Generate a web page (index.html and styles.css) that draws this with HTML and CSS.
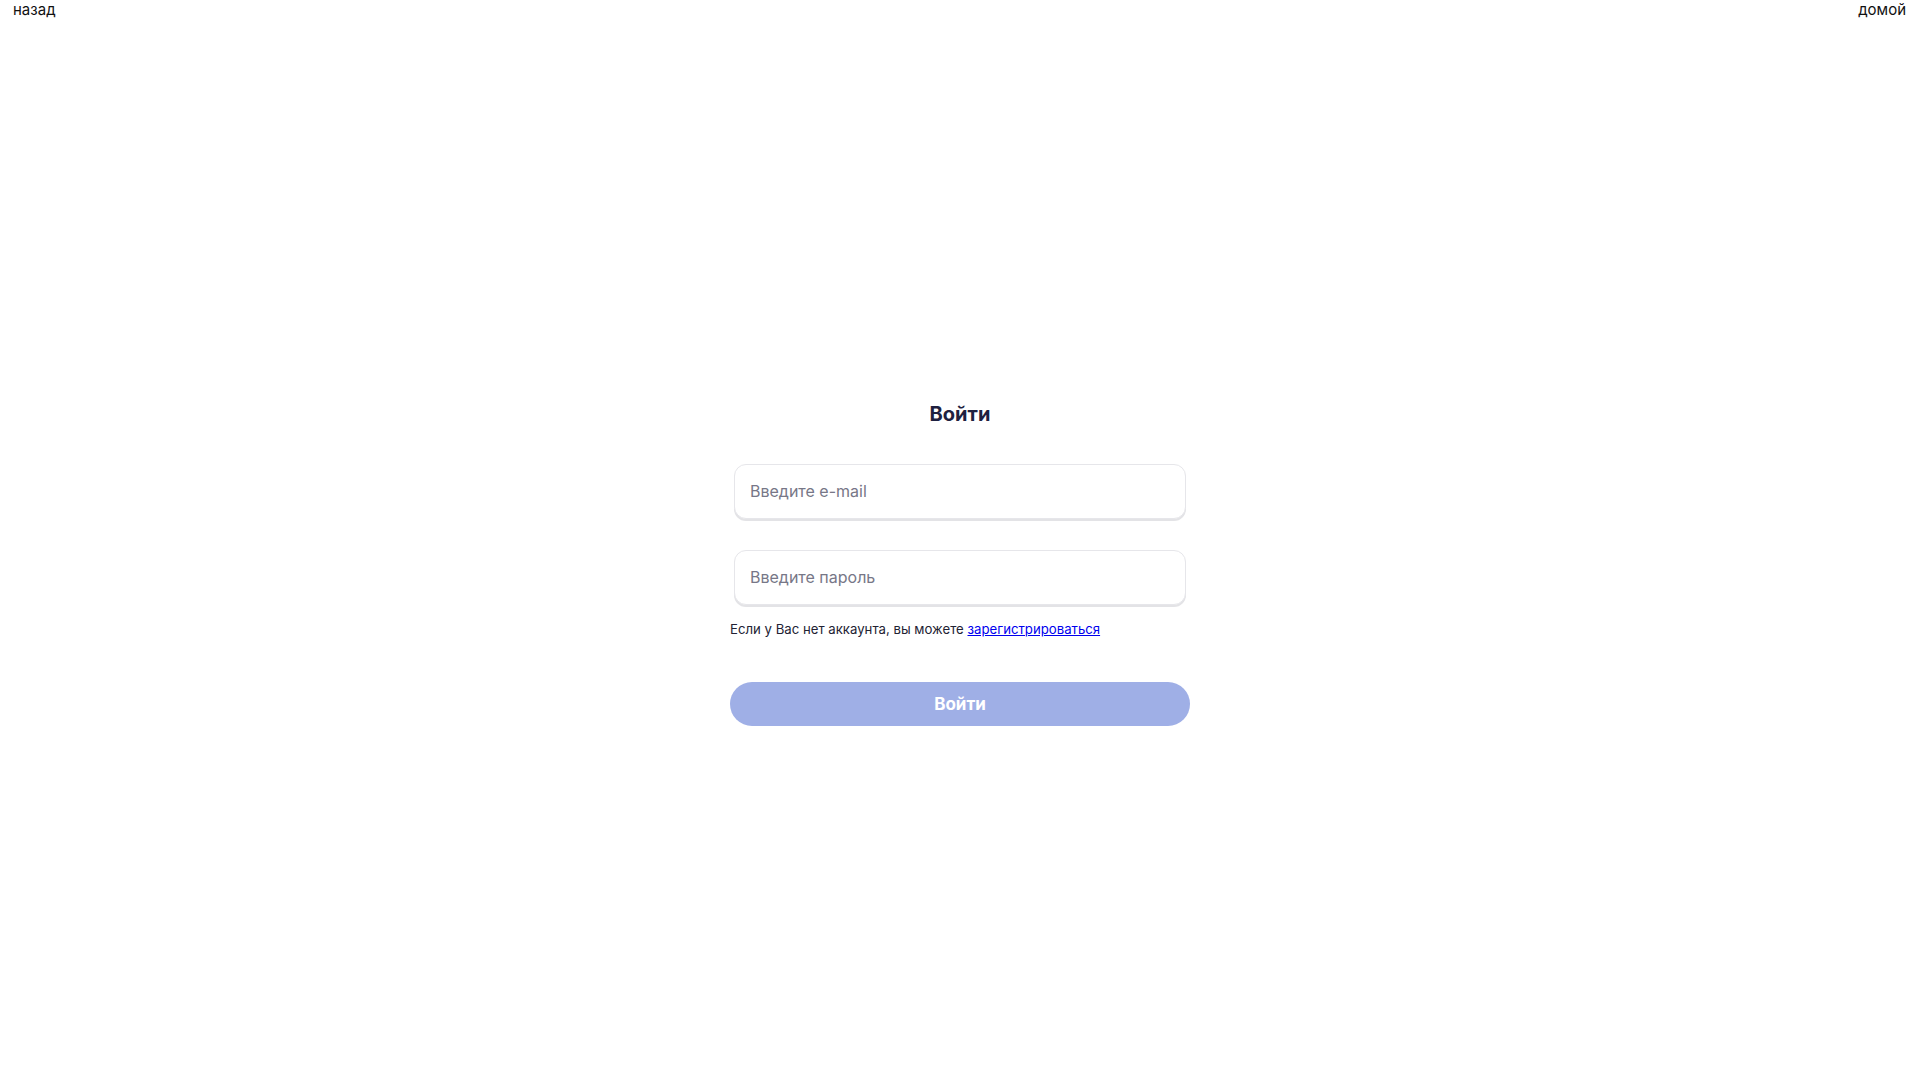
FILE: index.html
```html
<!DOCTYPE html>
<html lang="ru">
<head>
<meta charset="utf-8">
<title>Войти</title>
<link rel="stylesheet" href="styles.css">
</head>
<body>
<header class="topbar">
  <a class="nav-link" href="#">назад</a>
  <a class="nav-link" href="#">домой</a>
</header>
<main class="page">
  <form class="login">
    <h1 class="login-title">Войти</h1>
    <input class="field field-email" type="email" placeholder="Введите e-mail">
    <input class="field field-pass" type="password" placeholder="Введите пароль">
    <p class="hint">Если у Вас нет аккаунта, вы можете <a class="hint-link" href="#">зарегистрироваться</a></p>
    <button class="submit" type="button">Войти</button>
  </form>
</main>
</body>
</html>
```
FILE: styles.css
```css
html, body {
  margin: 0;
  padding: 0;
  background: #ffffff;
}

body {
  font-family: Inter, "Noto Sans", sans-serif;
  color: #111111;
}

.topbar {
  display: flex;
  justify-content: space-between;
  padding: 0 14px 0 13px;
  height: 19px;
  line-height: 19px;
  font-size: 15px;
}

.nav-link {
  color: #111111;
  text-decoration: none;
}

.page {
  height: 100vh;
  display: flex;
  align-items: center;
  justify-content: center;
  padding-top: 9px;
  box-sizing: border-box;
}

.login {
  width: 460px;
  display: flex;
  flex-direction: column;
  align-items: stretch;
}

.login-title {
  margin: 0;
  text-align: center;
  font-size: 20px;
  line-height: 25px;
  font-weight: 700;
  color: #1e2140;
}

.field {
  margin: 37px 4px 0;
  height: 55px;
  box-sizing: border-box;
  border: 1px solid #e6e6ea;
  border-radius: 12px;
  box-shadow: 0 2px 0 #e3e3e6;
  padding: 0 15px;
  font-family: Inter, "Noto Sans", sans-serif;
  font-size: 16px;
  color: #1e2140;
  background: #ffffff;
  outline: none;
}

.field-pass {
  margin-top: 31px;
}

.field::placeholder {
  color: #777787;
}

.hint {
  margin: 16px 0 0;
  font-size: 13.2px;
  line-height: 16px;
  color: #222233;
}

.hint-link {
  color: #0000ee;
  text-decoration: underline;
}

.submit {
  margin-top: 45px;
  height: 44px;
  border: none;
  border-radius: 22px;
  background: #9fafe6;
  color: #ffffff;
  font-family: Inter, "Noto Sans", sans-serif;
  font-size: 17px;
  font-weight: 700;
  cursor: pointer;
}
```
